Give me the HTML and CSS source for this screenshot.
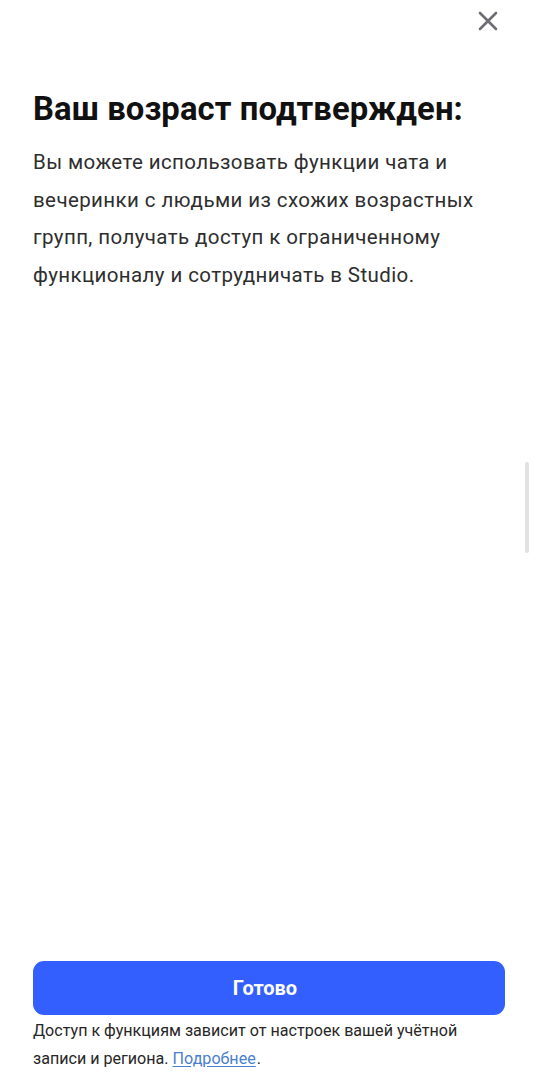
FILE: index.html
```html
<!DOCTYPE html>
<html lang="ru">
<head>
<meta charset="utf-8">
<link rel="stylesheet" href="styles.css">
</head>
<body>
<div class="screen">
  <header class="topbar">
    <button class="close" aria-label="Закрыть">
      <svg width="20" height="20" viewBox="0 0 20 20"><path d="M2 2 L18 18 M18 2 L2 18" stroke="#6d6d72" stroke-width="2.6" stroke-linecap="round" fill="none"/></svg>
    </button>
  </header>
  <main class="content">
    <h1 class="title">Ваш возраст подтвержден:</h1>
    <p class="desc">Вы можете использовать функции чата и вечеринки с людьми из схожих возрастных групп, получать доступ к ограниченному функционалу и сотрудничать в Studio.</p>
  </main>
  <footer class="bottom">
    <button class="done">Готово</button>
    <p class="note">Доступ к функциям зависит от настроек вашей учётной записи и региона. <a href="#" class="more">Подробнее</a>.</p>
  </footer>
  <div class="scrollbar"></div>
</div>
</body>
</html>
```

FILE: styles.css
```css
html, body {
  margin: 0;
  padding: 0;
  background: #ffffff;
}
body {
  font-family: Roboto, "Noto Sans", "Liberation Sans", sans-serif;
  color: #1a1a1a;
}
.screen {
  position: relative;
  height: 1080px;
  display: flex;
  flex-direction: column;
  box-sizing: border-box;
}
.topbar {
  display: flex;
  justify-content: flex-end;
  padding: 11px 40px 0 0;
}
.close {
  width: 20px;
  height: 20px;
  padding: 0;
  border: 0;
  background: none;
  display: flex;
}
.content {
  flex: 1;
  padding: 0 33px;
}
.title {
  margin: 56px 0 0;
  font-size: 32.8px;
  font-weight: 700;
  line-height: 44px;
  color: #111111;
  letter-spacing: 0.1px;
}
.desc {
  margin: 13px 0 0;
  font-size: 20.5px;
  line-height: 37.7px;
  letter-spacing: 0.4px;
  color: #2e2e2e;
}
.bottom {
  padding: 0 33px 8px;
}
.done {
  display: block;
  width: 100%;
  height: 54px;
  border: 0;
  border-radius: 11px;
  background: #335fff;
  color: #ffffff;
  font-family: inherit;
  font-size: 20px;
  font-weight: 700;
  padding: 0 8px 0 0;
}
.note {
  margin: 2px 0 0;
  padding-right: 20px;
  font-size: 16.1px;
  line-height: 27.5px;
  color: #262626;
}
.more {
  color: #4a80cc;
  text-decoration: underline;
  text-underline-offset: 2px;
  margin-right: 1px;
}
.scrollbar {
  position: absolute;
  left: 525px;
  top: 462px;
  width: 4px;
  height: 91px;
  border-radius: 2px;
  background: #e2e2e2;
}
```
